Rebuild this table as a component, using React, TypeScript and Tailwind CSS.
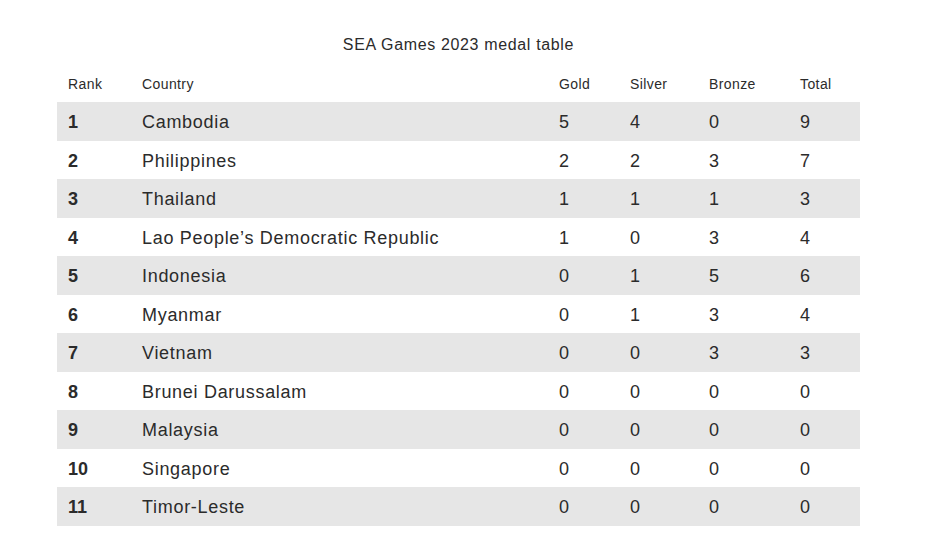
const rows: [number, string, number, number, number, number][] = [
  [1, 'Cambodia', 5, 4, 0, 9],
  [2, 'Philippines', 2, 2, 3, 7],
  [3, 'Thailand', 1, 1, 1, 3],
  [4, 'Lao People’s Democratic Republic', 1, 0, 3, 4],
  [5, 'Indonesia', 0, 1, 5, 6],
  [6, 'Myanmar', 0, 1, 3, 4],
  [7, 'Vietnam', 0, 0, 3, 3],
  [8, 'Brunei Darussalam', 0, 0, 0, 0],
  [9, 'Malaysia', 0, 0, 0, 0],
  [10, 'Singapore', 0, 0, 0, 0],
  [11, 'Timor-Leste', 0, 0, 0, 0],
];

const cols = 'grid grid-cols-[74px_417px_71px_79px_91px_71px]';

export default function App() {
  return (
    <div className="w-[937px] h-[556px] bg-white text-[#2b2b2b] font-['Liberation_Sans',Arial,sans-serif]">
      <div className="ml-[57px] w-[803px] pt-[34px]">
        <h1 className="text-center text-[16px] leading-[22px] tracking-[0.65px]">SEA Games 2023 medal table</h1>
        <div className={`${cols} h-[37px] mt-[9px] pt-[2px] items-center text-[14px] tracking-[0.4px]`}>
          {['Rank', 'Country', 'Gold', 'Silver', 'Bronze', 'Total'].map((h) => (
            <div key={h} className="pl-[11px]">{h}</div>
          ))}
        </div>
        <div>
          {rows.map(([rank, country, g, s, b, t], i) => (
            <div
              key={rank}
              className={`${cols} h-[38.5px] pt-[3px] items-center text-[18px] tracking-[0.7px] ${i % 2 === 0 ? 'bg-[#e6e6e6]' : 'bg-white'}`}
            >
              <div className="pl-[11px] font-bold tracking-normal">{rank}</div>
              <div className="pl-[11px]">{country}</div>
              <div className="pl-[11px]">{g}</div>
              <div className="pl-[11px]">{s}</div>
              <div className="pl-[11px]">{b}</div>
              <div className="pl-[11px]">{t}</div>
            </div>
          ))}
        </div>
      </div>
    </div>
  );
}
